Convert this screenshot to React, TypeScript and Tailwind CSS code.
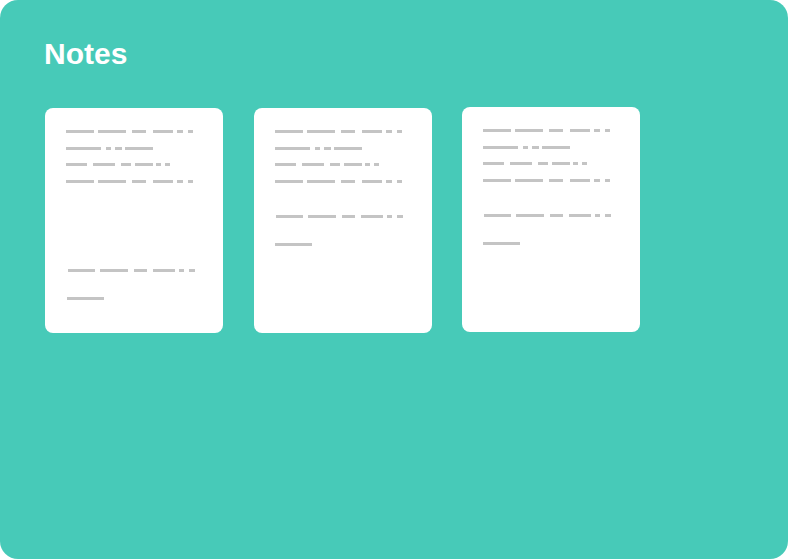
const line1 = ["ml-[21px] w-[28px]", "ml-[4px] w-[28px]", "ml-[6px] w-[14px]", "ml-[7px] w-[20px]", "ml-[4px] w-[6px]", "ml-[5px] w-[5px]"];
const line2 = ["ml-[21px] w-[35px]", "ml-[5px] w-[5px]", "ml-[4px] w-[7px]", "ml-[3px] w-[28px]"];
const line3 = ["ml-[21px] w-[21px]", "ml-[6px] w-[22px]", "ml-[6px] w-[10px]", "ml-[4px] w-[18px]", "ml-[3px] w-[5px]", "ml-[4px] w-[5px]"];
const line5a = ["ml-[23px] w-[27px]", "ml-[5px] w-[28px]", "ml-[6px] w-[13px]", "ml-[6px] w-[22px]", "ml-[4px] w-[5px]", "ml-[5px] w-[6px]"];
const line5b = ["ml-[22px] w-[27px]", "ml-[5px] w-[28px]", "ml-[6px] w-[13px]", "ml-[6px] w-[22px]", "ml-[4px] w-[5px]", "ml-[5px] w-[6px]"];

const Line = ({ segs, className }: { segs: string[]; className: string }) => (
  <div className={"flex h-[3px] " + className}>
    {segs.map((s, i) => (
      <span key={i} className={"block h-[3px] bg-[#c4c4c4] " + s} />
    ))}
  </div>
);

// placeholder note: four text lines, then a paragraph and a short signature line
const NoteCard = ({ wide, className = "" }: { wide?: boolean; className?: string }) => (
  <div className={"flex h-[225px] w-[178px] flex-col rounded-[8px] bg-white pt-[22px] " + className}>
    <Line segs={line1} className="" />
    <Line segs={line2} className="mt-[14px]" />
    <Line segs={line3} className="mt-[13px]" />
    <Line segs={line1} className="mt-[14px]" />
    {wide ? (
      <>
        <Line segs={line5a} className="mt-[86px]" />
        <Line segs={["ml-[22px] w-[37px]"]} className="mt-[25px]" />
      </>
    ) : (
      <>
        <Line segs={line5b} className="mt-[32px]" />
        <Line segs={["ml-[21px] w-[37px]"]} className="mt-[25px]" />
      </>
    )}
  </div>
);

export default function App() {
  return (
    <div className="min-h-[559px] w-[788px] bg-white">
      <div className="h-[559px] w-[788px] rounded-[18px] bg-[#47cab8] px-[45px] pt-[39px]">
        <h1 className="ml-[-1px] text-[30px] font-bold leading-[30px] text-white" style={{ fontFamily: '"Liberation Sans", Arial, sans-serif' }}>
          Notes
        </h1>
        <div className="mt-[39px] flex items-start">
          <NoteCard wide />
          <NoteCard className="ml-[31px]" />
          <NoteCard className="ml-[30px] mt-[-1px]" />
        </div>
      </div>
    </div>
  );
}
